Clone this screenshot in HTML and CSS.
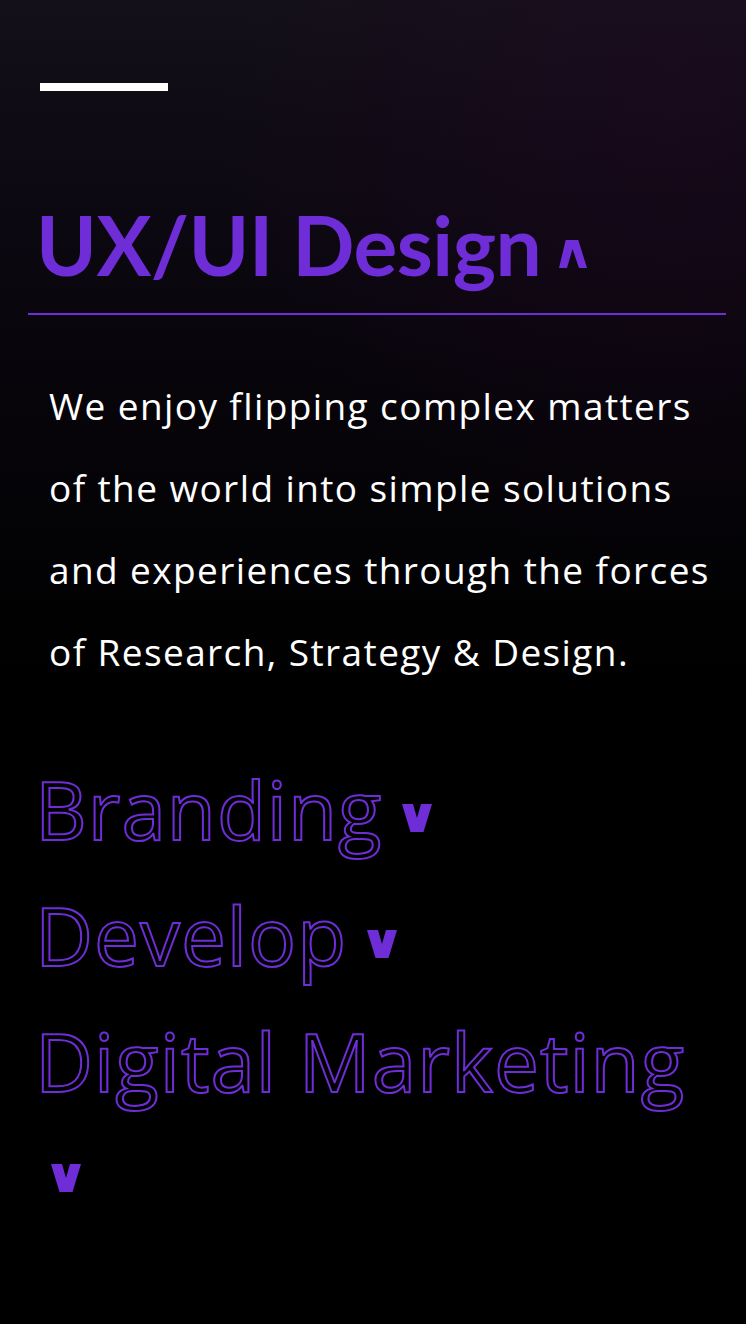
FILE: index.html
```html
<!DOCTYPE html>
<html lang="en">
<head>
<meta charset="utf-8">
<title>Services</title>
<link rel="stylesheet" href="styles.css">
</head>
<body>
<main class="page">
  <div class="bar"></div>

  <section class="item is-open">
    <h2 class="item-title solid">UX/UI Design<span class="toggle"> <svg class="icon" viewBox="0 0 28 28" aria-hidden="true"><polygon points="6.7,0 19.3,0 28,28 20,28 13.5,9 8,28 0,28" fill="currentColor"/></svg></span></h2>
    <div class="item-body">
      <p class="item-text">We enjoy flipping complex matters of the world into simple solutions and experiences through the forces of Research, Strategy &amp; Design.</p>
    </div>
  </section>

  <section class="item">
    <h2 class="item-title outline">Branding<span class="toggle"> <svg class="icon" viewBox="0 0 30 28" aria-hidden="true"><polygon points="0,0 11,0 15,14 19,0 30,0 21.5,28 8.5,28" fill="currentColor"/></svg></span></h2>
  </section>

  <section class="item">
    <h2 class="item-title outline">Develop<span class="toggle"> <svg class="icon" viewBox="0 0 30 28" aria-hidden="true"><polygon points="0,0 11,0 15,14 19,0 30,0 21.5,28 8.5,28" fill="currentColor"/></svg></span></h2>
  </section>

  <section class="item">
    <h2 class="item-title outline">Digital Marketing<span class="toggle"> <svg class="icon" viewBox="0 0 30 28" aria-hidden="true"><polygon points="0,0 11,0 15,14 19,0 30,0 21.5,28 8.5,28" fill="currentColor"/></svg></span></h2>
  </section>
</main>
</body>
</html>
```

FILE: styles.css
```css
html, body {
  margin: 0;
  padding: 0;
}

body {
  min-height: 1324px;
  background-color: #000;
  background-image:
    radial-gradient(ellipse 60% 35% at 90% 8%, rgba(40, 8, 40, 0.35), rgba(40, 8, 40, 0) 100%),
    linear-gradient(180deg, #131019 0px, #0c0811 220px, #060409 420px, #010102 620px, #000 760px);
  background-repeat: no-repeat;
  font-family: "Open Sans", "Liberation Sans", sans-serif;
  color: #fff;
  font-variant-ligatures: none;
}

.page {
  padding: 83px 20px 0 28px;
}

.bar {
  width: 128px;
  height: 8px;
  margin-left: 12px;
  background: #fff;
}

.item-title {
  margin: 0;
  color: #6f2dd8;
  font-weight: 700;
}

.solid {
  padding-left: 8px;
  font-family: "Lato", "Liberation Sans", sans-serif;
  font-size: 82px;
  line-height: 82px;
  letter-spacing: -0.5px;
}

.toggle {
  font-size: 30px;
  line-height: 0;
  letter-spacing: 0;
}

.icon {
  display: inline-block;
  width: 28px;
  height: 28px;
  margin-left: 12px;
  vertical-align: 8px;
  color: #6f2dd8;
}

.solid .icon {
  margin-left: 10px;
}

.is-open .item-title {
  margin-top: 112px;
  padding-bottom: 28px;
  border-bottom: 2px solid #6f2dd8;
}

.item-body {
  padding: 0 10px 0 21px;
}

.item-text {
  margin: 50px 0 0;
  font-size: 37px;
  line-height: 82px;
  font-weight: 400;
  letter-spacing: 1.4px;
}

.outline {
  padding-left: 7px;
  font-size: 80px;
  line-height: 108px;
  font-weight: 500;
  letter-spacing: 1px;
  color: transparent;
  -webkit-text-stroke: 2px #6f2dd8;
}

.outline .toggle {
  font-size: 14px;
}

.outline .icon {
  width: 30px;
  margin-left: 16px;
}

.item + .item {
  margin-top: 18px;
}

.is-open + .item {
  margin-top: 62px;
}
```
